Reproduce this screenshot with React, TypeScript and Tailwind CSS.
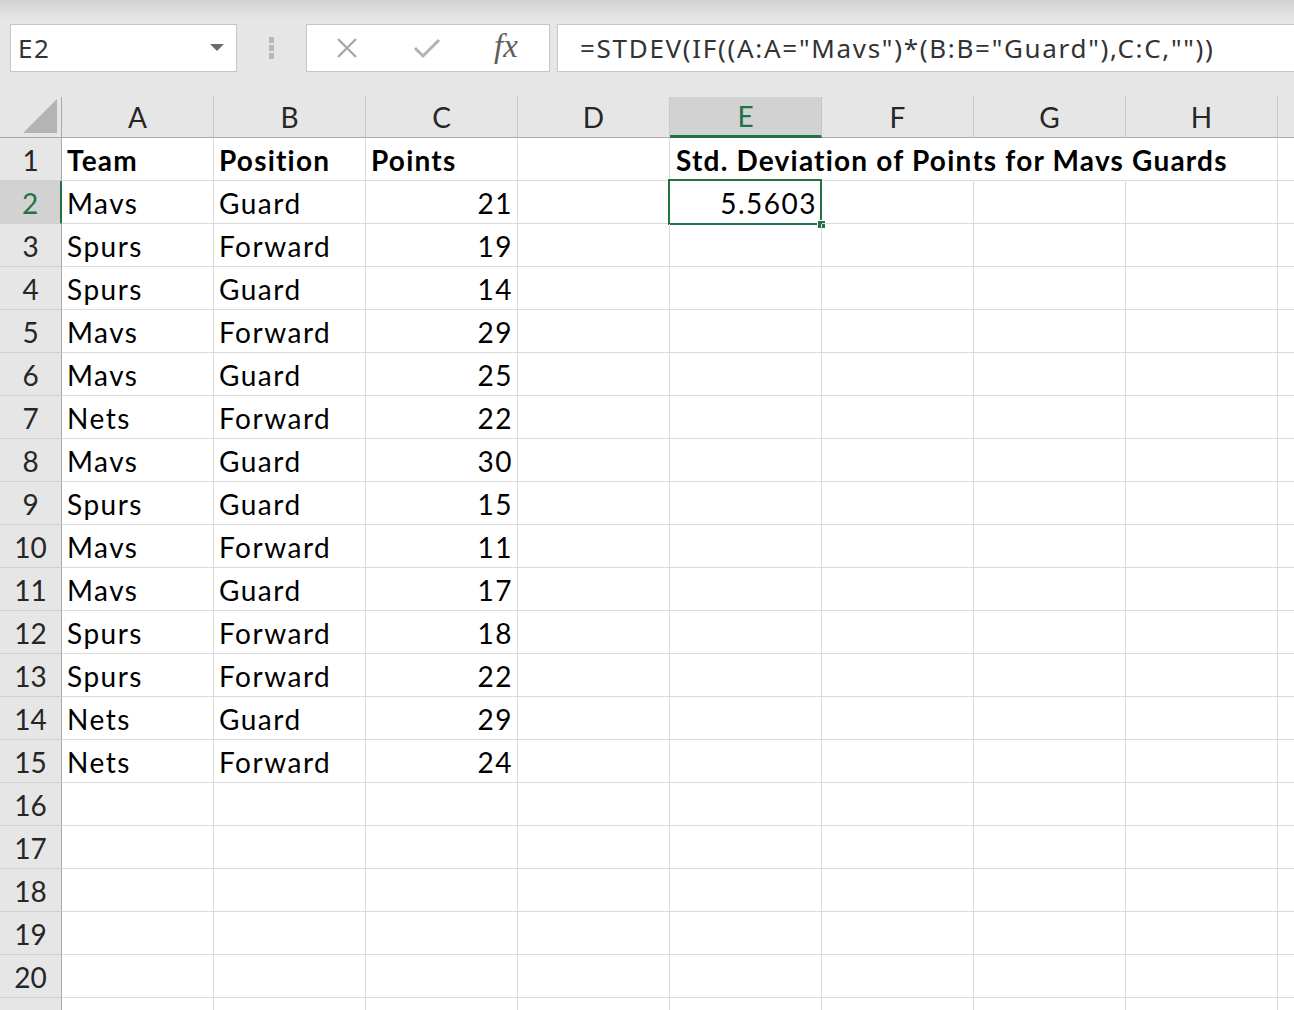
import React from "react";

const COLS = ["A", "B", "C", "D", "E", "F", "G", "H"];

const DATA: [string, string, string][] = [
  ["Mavs", "Guard", "21"],
  ["Spurs", "Forward", "19"],
  ["Spurs", "Guard", "14"],
  ["Mavs", "Forward", "29"],
  ["Mavs", "Guard", "25"],
  ["Nets", "Forward", "22"],
  ["Mavs", "Guard", "30"],
  ["Spurs", "Guard", "15"],
  ["Mavs", "Forward", "11"],
  ["Mavs", "Guard", "17"],
  ["Spurs", "Forward", "18"],
  ["Spurs", "Forward", "22"],
  ["Nets", "Guard", "29"],
  ["Nets", "Forward", "24"],
];

const FONT = "font-['Lato','Noto_Sans',sans-serif]";

function Toolbar() {
  return (
    <div className="h-[97px] bg-[linear-gradient(to_bottom,#d2d2d2_0px,#e6e6e6_20px)] pt-[24px] flex items-start">
      {/* name box */}
      <div className="ml-[10px] w-[227px] h-[48px] bg-white border border-[#c6c6c6] flex items-center justify-between pl-[7px] pr-[12px]">
        <span className="text-[26px] text-[#333] font-['Noto_Sans',sans-serif] tracking-[1.5px]">E2</span>
        <svg width="14" height="8" viewBox="0 0 14 8">
          <path d="M0 0 L14 0 L7 7 Z" fill="#6b6b6b" />
        </svg>
      </div>

      {/* grip dots */}
      <div className="ml-[32px] mt-[13px] flex flex-col gap-[2px]">
        <div className="w-[5px] h-[6px] bg-[#b8b8b8]" />
        <div className="w-[5px] h-[6px] bg-[#b8b8b8]" />
        <div className="w-[5px] h-[6px] bg-[#b8b8b8]" />
      </div>

      {/* cancel / enter / fx */}
      <div className="ml-[32px] w-[244px] h-[48px] bg-white border border-[#c6c6c6] flex items-center">
        <svg className="ml-[29px]" width="22" height="22" viewBox="0 0 22 22">
          <path d="M2 2 L20 20 M20 2 L2 20" stroke="#a8a8a8" strokeWidth="2.4" />
        </svg>
        <svg className="ml-[55px]" width="28" height="22" viewBox="0 0 28 22">
          <path d="M2 11 L10 19 L26 3" stroke="#b2b2b2" strokeWidth="3" fill="none" />
        </svg>
        <span className="ml-[53px] text-[33px] italic text-[#5e5e5e] font-['Liberation_Serif',serif] leading-none -mt-[4px]">
          fx
        </span>
      </div>

      {/* formula input */}
      <div className="ml-[7px] flex-1 h-[48px] bg-white border border-r-0 border-[#c6c6c6] flex items-center pl-[22px]">
        <span className="text-[26px] text-[#333] font-['Noto_Sans',sans-serif] tracking-[1.7px] whitespace-nowrap">
          =STDEV(IF((A:A="Mavs")*(B:B="Guard"),C:C,""))
        </span>
      </div>
    </div>
  );
}

function HeaderRow() {
  return (
    <div className="flex h-[41px]">
      <div className="w-[62px] shrink-0 border-r border-b border-[#a9a9a9] bg-[#e6e6e6] relative">
        <svg className="absolute right-[4px] bottom-[4px]" width="34" height="34" viewBox="0 0 34 34">
          <path d="M34 0 L34 34 L0 34 Z" fill="#b4b4b4" />
        </svg>
      </div>
      {COLS.map((c) => {
        const sel = c === "E";
        return (
          <div
            key={c}
            className={
              sel
                ? "w-[152px] shrink-0 bg-[#d2d2d2] border-r border-r-[#c4c4c4] border-b-[3px] border-b-[#217346] flex items-center justify-center text-[28px] text-[#217346]"
                : "w-[152px] shrink-0 bg-[#e6e6e6] border-r border-r-[#c8c8c8] border-b border-b-[#a9a9a9] flex items-center justify-center text-[28px] text-[#262626]"
            }
          >
            {c}
          </div>
        );
      })}
      <div className="flex-1 bg-[#e6e6e6] border-b border-[#a9a9a9]" />
    </div>
  );
}

function Cell({
  children,
  right,
  bold,
  noRight,
  selected,
}: {
  children?: React.ReactNode;
  right?: boolean;
  bold?: boolean;
  noRight?: boolean;
  selected?: boolean;
}) {
  return (
    <div
      className={[
        "w-[152px] shrink-0 h-full border-b border-[#dadada] flex items-center pt-[2px] text-[28px] text-black whitespace-nowrap relative",
        noRight ? "border-r border-r-white" : "border-r border-r-[#dadada]",
        right ? "justify-end pl-[5px] pr-[4px]" : "justify-start px-[5px]",
        bold ? "font-bold tracking-[1.2px]" : "tracking-[1.5px]",
      ].join(" ")}
    >
      {children}
      {selected && (
        <>
          <div className="absolute -left-[2px] -top-[2px] -right-[1px] -bottom-[2px] border-[2.5px] border-[#217346]" />
          <div className="absolute -right-[4px] -bottom-[5px] w-[7px] h-[7px] bg-[#217346] outline outline-1 outline-white" />
        </>
      )}
    </div>
  );
}

function Row({ n }: { n: number }) {
  const sel = n === 2;
  const d = n >= 2 && n <= 15 ? DATA[n - 2] : null;
  return (
    <div className="flex h-[43px]">
      <div
        className={
          sel
            ? "w-[62px] shrink-0 bg-[#d2d2d2] border-r-2 border-r-[#217346] border-b border-b-[#cfcfcf] flex items-center justify-center pt-[2px] text-[28px] text-[#217346]"
            : "w-[62px] shrink-0 bg-[#e6e6e6] border-r border-r-[#a9a9a9] border-b border-b-[#cfcfcf] flex items-center justify-center pt-[2px] text-[28px] text-[#262626]"
        }
      >
        {n}
      </div>
      {n === 1 ? (
        <>
          <Cell bold>Team</Cell>
          <Cell bold>Position</Cell>
          <Cell bold>Points</Cell>
          <Cell />
          <Cell bold noRight>
            <span className="absolute left-[6px]">Std. Deviation of Points for Mavs Guards</span>
          </Cell>
          <Cell noRight />
          <Cell noRight />
          <Cell />
        </>
      ) : (
        <>
          <Cell>{d?.[0]}</Cell>
          <Cell>{d?.[1]}</Cell>
          <Cell right>{d?.[2]}</Cell>
          <Cell />
          <Cell right selected={sel}>
            {sel ? "5.5603" : null}
          </Cell>
          <Cell />
          <Cell />
          <Cell />
        </>
      )}
      <div className="flex-1 border-b border-[#dadada]" />
    </div>
  );
}

export default function App() {
  return (
    <div className={`w-[1294px] h-[1010px] overflow-hidden bg-white ${FONT}`}>
      <Toolbar />
      <HeaderRow />
      {Array.from({ length: 20 }, (_, i) => (
        <Row key={i} n={i + 1} />
      ))}
      <div className="flex h-[20px]">
        <div className="w-[62px] shrink-0 bg-[#e6e6e6] border-r border-r-[#a9a9a9]" />
        {COLS.map((c) => (
          <div key={c} className="w-[152px] shrink-0 border-r border-r-[#dadada]" />
        ))}
      </div>
    </div>
  );
}
